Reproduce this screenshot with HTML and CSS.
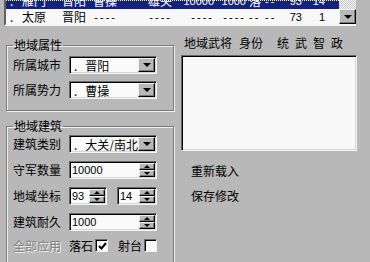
FILE: index.html
```html
<!DOCTYPE html>
<html lang="zh">
<head>
    <meta charset="UTF-8">
    <title>地域编辑</title>
    <link rel="stylesheet" href="styles.css">
</head>
<body>
    <!-- 地域列表 -->
    <div class="region-list">
        <div class="rows">
            <div class="row sel">
                <span>.</span><span>雁门</span><span>晋阳</span><span class="r">曹操</span><span class="r">雄关</span><span class="r num">10000</span><span class="r num">1000</span><span class="p">落</span><span class="p dash">--</span><span class="r num">93</span><span class="r num">14</span>
            </div>
            <div class="row">
                <span>.</span><span>太原</span><span>晋阳</span><span class="r dash">----</span><span class="r dash">----</span><span class="r dash">----</span><span class="r dash">----</span><span class="p dash">--</span><span class="p dash">--</span><span class="r num">73</span><span class="r num">1</span>
            </div>
        </div>
        <div class="vscroll">
            <div class="track"></div>
            <div class="btn3d arrow-btn"><span class="tri-down"></span></div>
        </div>
    </div>

    <div class="main">
        <div class="left">
            <fieldset class="group group-attr">
                <legend>地域属性</legend>
                <div class="field">
                    <span class="label">所属城市</span>
                    <div class="combo"><span class="val"><i>.</i>晋阳</span><span class="btn3d drop"><span class="tri-down"></span></span></div>
                </div>
                <div class="field">
                    <span class="label">所属势力</span>
                    <div class="combo"><span class="val"><i>.</i>曹操</span><span class="btn3d drop"><span class="tri-down"></span></span></div>
                </div>
            </fieldset>

            <fieldset class="group group-build">
                <legend>地域建筑</legend>
                <div class="field">
                    <span class="label">建筑类别</span>
                    <div class="combo"><span class="val"><i>.</i>大关/南北</span><span class="btn3d drop"><span class="tri-down"></span></span></div>
                </div>
                <div class="field">
                    <span class="label">守军数量</span>
                    <div class="spin"><span class="val num">10000</span><span class="updown"><span class="btn3d"><span class="tri-up sm"></span></span><span class="btn3d"><span class="tri-down sm"></span></span></span></div>
                </div>
                <div class="field">
                    <span class="label">地域坐标</span>
                    <div class="spin short"><span class="val num">93</span><span class="updown"><span class="btn3d"><span class="tri-up sm"></span></span><span class="btn3d"><span class="tri-down sm"></span></span></span></div>
                    <div class="spin short second"><span class="val num">14</span><span class="updown"><span class="btn3d"><span class="tri-up sm"></span></span><span class="btn3d"><span class="tri-down sm"></span></span></span></div>
                </div>
                <div class="field">
                    <span class="label">建筑耐久</span>
                    <div class="spin"><span class="val num">1000</span><span class="updown"><span class="btn3d"><span class="tri-up sm"></span></span><span class="btn3d"><span class="tri-down sm"></span></span></span></div>
                </div>
                <div class="field checks">
                    <span class="label disabled">全部应用</span>
                    <span class="check-label">落石</span>
                    <span class="checkbox">
                        <svg width="9" height="9" viewBox="0 0 9 9"><path d="M1 4 L3.5 6.5 L8 1" fill="none" stroke="#000" stroke-width="2"/></svg>
                    </span>
                    <span class="check-label second">射台</span>
                    <span class="checkbox"></span>
                </div>
            </fieldset>
        </div>

        <div class="right">
            <div class="gen-head">
                <span class="w-name">地域武将</span><span class="w-role">身份</span><span class="w-stat first">统</span><span class="w-stat">武</span><span class="w-stat">智</span><span class="w-stat">政</span>
            </div>
            <div class="gen-list"></div>
            <div class="actions">
                <div class="action">重新载入</div>
                <div class="action">保存修改</div>
            </div>
        </div>
    </div>
</body>
</html>
```

FILE: styles.css
```css
* {
    box-sizing: border-box;
}

body {
    margin: 0;
    height: 262px;
    overflow: hidden;
    background-color: #b8b8b8;
    font-family: "Noto Sans CJK SC", "Liberation Sans", sans-serif;
    font-size: 12px;
    line-height: 12px;
    color: #000;
}

.num,
.dash {
    font-family: "Liberation Sans", sans-serif;
    font-size: 11px;
}

.dash {
    letter-spacing: 2px;
}

/* 顶部列表 */
.region-list {
    display: flex;
    margin-left: 4px;
    width: 352px;
    height: 26px;
    border-left: 2px solid #606060;
    border-bottom: 2px solid #f4f4f4;
    overflow: hidden;
}

.rows {
    flex: 1;
    background: #f8f8f8;
    overflow: hidden;
}

.row {
    display: grid;
    grid-template-columns: 12px 40px 24px 31px 55px 42px 32px 16px 18px 22px 23px;
    height: 16px;
    line-height: 16px;
    padding-left: 4px;
    white-space: nowrap;
}

.row.sel {
    margin-top: -7px;
    color: #fff;
    background:
        repeating-linear-gradient(90deg, #fff 0 1px, transparent 1px 2px) 0 7px / 100% 1px no-repeat,
        #14227e;
}

.row .r {
    text-align: right;
}

.row .p {
    padding-left: 3px;
}

.vscroll {
    width: 17px;
    display: flex;
    flex-direction: column;
}

.track {
    flex: 1;
    background: repeating-conic-gradient(#c8c8c8 0 25%, #f4f4f4 0 50%) 0 0 / 2px 2px;
}

.arrow-btn {
    height: 15px;
    display: flex;
    align-items: center;
    justify-content: center;
}

/* 立体按钮 */
.btn3d {
    background: #b8b8b8;
    border-top: 1px solid #f0f0f0;
    border-left: 1px solid #f0f0f0;
    border-right: 1px solid #000;
    border-bottom: 1px solid #000;
    box-shadow: inset -1px -1px 0 #7a7a7a;
}

.tri-down {
    width: 0;
    height: 0;
    border-left: 4px solid transparent;
    border-right: 4px solid transparent;
    border-top: 4px solid #000;
}

.tri-up {
    width: 0;
    height: 0;
    border-left: 4px solid transparent;
    border-right: 4px solid transparent;
    border-bottom: 4px solid #000;
}

.tri-up.sm,
.tri-down.sm {
    border-left-width: 3px;
    border-right-width: 3px;
}

.tri-up.sm {
    border-bottom-width: 3px;
}

.tri-down.sm {
    border-top-width: 3px;
}

/* 主体 */
.main {
    display: flex;
    gap: 7px;
    padding-left: 6px;
}

.left {
    width: 168px;
    flex: none;
}

.group {
    margin: 0;
    min-width: 0;
    border: 1px solid #7c7c7c;
    box-shadow: inset 1px 1px 0 #f0f0f0, 1px 1px 0 #f0f0f0;
    padding: 0 0 0 6px;
}

.group legend {
    padding: 0 1px;
    line-height: 12px;
    height: 12px;
}

.group-attr {
    margin-top: 13px;
    padding-top: 5px;
    padding-bottom: 11px;
}

.group-attr .field + .field {
    margin-top: 7px;
}

.group-build {
    margin-top: 9px;
    padding-top: 3px;
    padding-bottom: 20px;
}

.group-build .field + .field {
    margin-top: 8px;
}

.field {
    display: flex;
    align-items: center;
}

.label {
    width: 56px;
    flex: none;
}

.label.disabled {
    color: #808080;
    text-shadow: 1px 1px 0 #f4f4f4;
}

.combo,
.spin {
    display: flex;
    width: 88px;
    height: 18px;
    background: #fafafa;
    border-top: 1px solid #6a6a6a;
    border-left: 1px solid #6a6a6a;
    border-right: 1px solid #f4f4f4;
    border-bottom: 1px solid #f4f4f4;
    box-shadow: inset 1px 1px 0 #000, inset -1px -1px 0 #d8d8d8;
    padding: 1px;
}

.spin.short {
    width: 38px;
}

.spin.short.second {
    width: 40px;
    margin-left: 10px;
}

.val {
    flex: 1;
    line-height: 15px;
    padding-left: 1px;
    white-space: nowrap;
    overflow: hidden;
}

.combo .val {
    padding-left: 3px;
}

.combo .val i {
    font-style: normal;
    margin-right: 8px;
}

.drop {
    width: 17px;
    display: flex;
    align-items: center;
    justify-content: center;
}

.updown {
    width: 16px;
    display: flex;
    flex-direction: column;
}

.updown .btn3d {
    flex: 1;
    display: flex;
    align-items: center;
    justify-content: center;
}

.checks .check-label.second {
    margin-left: 10px;
}

.checkbox {
    width: 13px;
    height: 13px;
    margin-left: 2px;
    background: #fafafa;
    border-top: 1px solid #6a6a6a;
    border-left: 1px solid #6a6a6a;
    border-right: 1px solid #f4f4f4;
    border-bottom: 1px solid #f4f4f4;
    box-shadow: inset 1px 1px 0 #000;
    display: flex;
    align-items: center;
    justify-content: center;
    padding: 1px 0 0 1px;
}

/* 右侧 */
.right {
    width: 176px;
    flex: none;
    display: flex;
    flex-direction: column;
}

.gen-head {
    display: flex;
    margin-top: 11px;
    padding-left: 3px;
    white-space: nowrap;
}

.w-role {
    margin-left: 7px;
}

.w-stat {
    margin-left: 6px;
}

.w-stat.first {
    margin-left: 14px;
}

.gen-list {
    height: 96px;
    margin-top: 6px;
    background: #f8f8f8;
    border-top: 1px solid #6a6a6a;
    border-left: 1px solid #6a6a6a;
    border-right: 1px solid #f4f4f4;
    border-bottom: 1px solid #f4f4f4;
    box-shadow: inset 1px 1px 0 #000, inset -1px -1px 0 #d8d8d8;
}

.actions {
    margin-top: 12px;
}

/* 平面按钮：无可见边框 */
.action {
    width: 64px;
    height: 14px;
    line-height: 14px;
    padding-left: 9px;
    border: 1px solid transparent;
}

.action + .action {
    margin-top: 11px;
}
```
